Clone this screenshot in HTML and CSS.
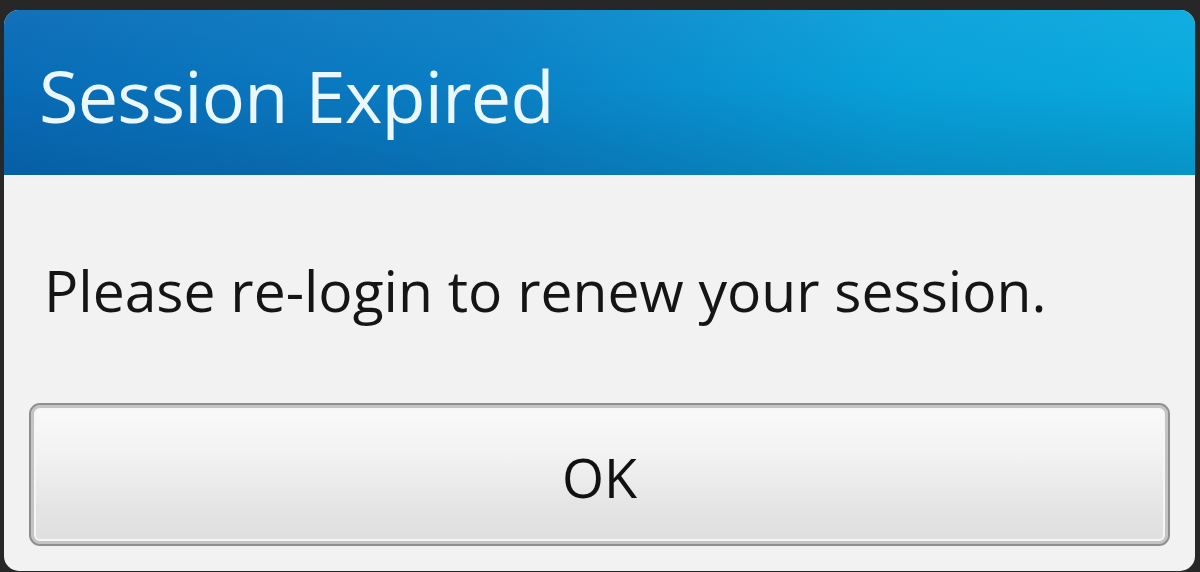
FILE: index.html
```html
<!DOCTYPE html>
<html>
<head>
<meta charset="utf-8">
<link rel="stylesheet" href="styles.css">
</head>
<body>
<div class="dialog">
  <div class="header">
    <h1 class="title">Session Expired</h1>
  </div>
  <div class="content">
    <p class="message">Please re-login to renew your session.</p>
    <div class="actions">
      <button class="btn">OK</button>
    </div>
  </div>
</div>
</body>
</html>
```

FILE: styles.css
```css
html, body {
  margin: 0;
  padding: 0;
  background: #272727;
  width: 1200px;
  height: 572px;
  overflow: hidden;
}
body {
  padding: 10px 5px 0 4px;
  box-sizing: border-box;
  font-family: "Open Sans", "Liberation Sans", sans-serif;
}
.dialog {
  height: 561px;
  border-radius: 15px;
  overflow: hidden;
  background: #f2f2f2;
  display: flex;
  flex-direction: column;
}
.header {
  height: 165px;
  box-sizing: border-box;
  background:
    linear-gradient(180deg, rgba(255,255,255,0.04) 0%, rgba(0,0,0,0) 45%, rgba(0,30,70,0.16) 100%),
    linear-gradient(90deg, #086bb6 0%, #0a7fc5 40%, #08a0d9 75%, #08aade 100%);
  padding: 45px 0 0 35px;
}
.title {
  margin: 0;
  font-weight: 400;
  font-size: 72px;
  line-height: 80px;
  color: #eaf7fc;
  letter-spacing: -0.8px;
}
.content {
  flex: 1;
  padding: 80px 0 0 40px;
}
.message {
  margin: 0;
  font-size: 57px;
  line-height: 70px;
  color: #151515;
  letter-spacing: 0;
}
.actions {
  padding: 78px 25px 0 0;
  margin-left: -15px;
}
.btn {
  display: block;
  width: 100%;
  height: 143px;
  border: 2px solid #8f8f8f;
  border-radius: 11px;
  box-shadow: inset 0 0 0 3px #c4c4c4, inset 0 0 0 5px #f6f6f6;
  background: linear-gradient(180deg, #fafafa 0%, #f2f2f2 35%, #e4e4e4 75%, #dedede 100%);
  font-family: "Open Sans", "Liberation Sans", sans-serif;
  font-size: 54px;
  color: #111;
  padding: 4px 0 0;
  cursor: pointer;
}
```
